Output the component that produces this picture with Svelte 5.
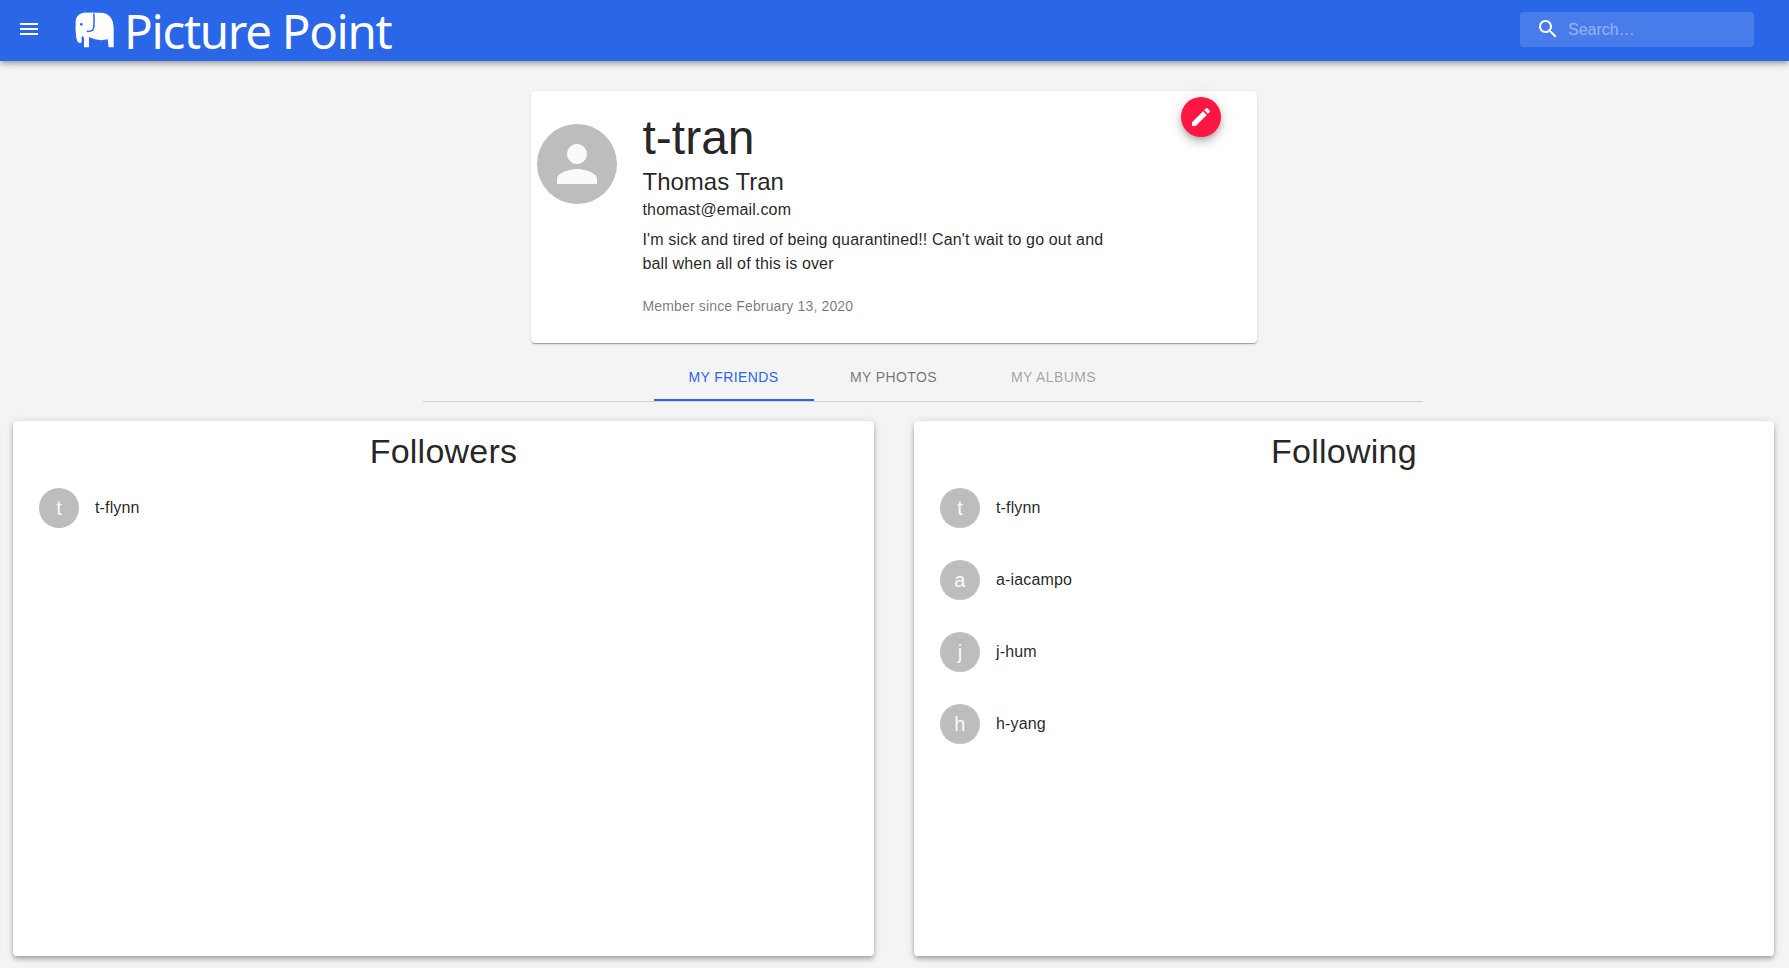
<script>
  const followers = ['t-flynn'];
  const following = ['t-flynn', 'a-iacampo', 'j-hum', 'h-yang'];
  const panels = [
    { title: 'Followers', users: followers },
    { title: 'Following', users: following }
  ];
</script>

<header class="bar">
  <svg class="icon menu" viewBox="0 0 24 24"><path d="M3 18h18v-2H3v2zm0-5h18v-2H3v2zm0-7v2h18V6H3z" /></svg>
  <div class="brand">
    <svg class="elephant" viewBox="0 0 117 108">
      <path fill="#fff" d="M22 3Q28 1 38 2Q48 1 58 2H76Q98 2 108 18Q116 29 116 46V106H101L98 82Q79 87 60 82Q48 78 42 76V106H27V77L23 72Q20 72 20 78V90Q19 94 14 93Q4 91 3 68Q1 52 2 28Q3 8 22 3Z" />
      <path class="ear" d="M56 5Q58 15 57 35Q57 54 50 56Q44 59 35 58" />
      <circle cx="19" cy="37" r="4" fill="#2a66e8" />
    </svg>
    <span class="name">Picture Point</span>
  </div>
  <label class="search">
    <svg class="icon" viewBox="0 0 24 24"><path d="M15.5 14h-.79l-.28-.27C15.41 12.59 16 11.11 16 9.5 16 5.91 13.09 3 9.5 3S3 5.91 3 9.5 5.91 16 9.5 16c1.61 0 3.09-.59 4.23-1.57l.27.28v.79l5 4.99L20.49 19l-4.99-5zm-6 0C7.01 14 5 11.99 5 9.5S7.01 5 9.5 5 14 7.01 14 9.5 11.99 14 9.5 14z" /></svg>
    <input placeholder="Search…" />
  </label>
</header>

<main>
  <section class="profile">
    <div class="avatar large">
      <svg viewBox="0 0 24 24"><path d="M12 12c2.21 0 4-1.79 4-4s-1.79-4-4-4-4 1.79-4 4 1.79 4 4 4zm0 2c-2.67 0-8 1.34-8 4v2h16v-2c0-2.66-5.33-4-8-4z" /></svg>
    </div>
    <div class="details">
      <h1>t-tran</h1>
      <h2>Thomas Tran</h2>
      <p>thomast@email.com</p>
      <p class="bio">I'm sick and tired of being quarantined!! Can't wait to go out and ball when all of this is over</p>
      <p class="since">Member since February 13, 2020</p>
    </div>
    <button class="fab" aria-label="Edit">
      <svg viewBox="0 0 24 24"><path d="M3 17.25V21h3.75L17.81 9.94l-3.75-3.75L3 17.25zM20.71 7.04c.39-.39.39-1.02 0-1.41l-2.34-2.34c-.39-.39-1.02-.39-1.41 0l-1.83 1.83 3.75 3.75 1.83-1.83z" /></svg>
    </button>
  </section>

  <nav class="tabs">
    <button class="tab active">My Friends</button>
    <button class="tab">My Photos</button>
    <button class="tab" disabled>My Albums</button>
  </nav>

  <div class="panels">
    {#each panels as panel}
      <section class="panel">
        <h3>{panel.title}</h3>
        <ul>
          {#each panel.users as user}
            <li><span class="avatar">{user[0]}</span><span>{user}</span></li>
          {/each}
        </ul>
      </section>
    {/each}
  </div>
</main>

<style>
  :global(body) {
    background: #f4f4f4;
    font-family: "Liberation Sans", Arial, sans-serif;
    color: rgba(0, 0, 0, 0.87);
    font-size: 16px;
    line-height: 24px;
    letter-spacing: 0.00938em;
  }
  main { padding-bottom: 12px; }
  h1, h2, h3, p, ul { margin: 0; padding: 0; font-weight: 400; }
  button, input { font: inherit; border: 0; background: none; padding: 0; margin: 0; outline: 0; }
  .bar {
    box-sizing: border-box;
    height: 61px;
    display: flex;
    align-items: flex-start;
    padding: 0 35px 0 17px;
    background: #2a66e8;
    color: #fff;
    position: relative;
    box-shadow: 0 2px 4px -1px rgba(0,0,0,.2), 0 4px 5px rgba(0,0,0,.14), 0 1px 10px rgba(0,0,0,.12);
  }
  .icon { width: 24px; height: 24px; fill: #fff; flex: none; }
  .menu { margin-top: 17px; }
  .brand { display: flex; margin-left: 34px; flex: 1; }
  .elephant { width: 39px; height: 36px; margin-top: 12px; flex: none; }
  .ear { fill: none; stroke: #2a66e8; stroke-width: 4.5; }
  .name {
    font-family: "Noto Sans", "Open Sans", sans-serif;
    font-size: 47.5px;
    line-height: 64px;
    letter-spacing: -1.3px;
    margin-left: 10px;
    margin-top: -1px;
    white-space: nowrap;
  }
  .search {
    box-sizing: border-box;
    width: 234px;
    height: 35px;
    margin-top: 12px;
    padding: 5px 8px 0 16px;
    display: flex;
    gap: 8px;
    border-radius: 4px;
    background: rgba(255, 255, 255, 0.15);
  }
  .search input { width: 170px; height: 24px; padding-top: 1px; color: #fff; letter-spacing: 0; }
  .search input::placeholder { color: #fff; opacity: 0.42; }
  .profile {
    box-sizing: border-box;
    width: 726px;
    height: 252px;
    margin: 30px 0 0 531px;
    padding: 6px 36px 0 6px;
    display: flex;
    align-items: flex-start;
    background: #fff;
    border-radius: 4px;
    box-shadow: 0 2px 1px -1px rgba(0,0,0,.2), 0 1px 1px rgba(0,0,0,.14), 0 1px 3px rgba(0,0,0,.12);
  }
  .avatar {
    width: 40px;
    height: 40px;
    border-radius: 50%;
    background: #bdbdbd;
    color: #fafafa;
    display: flex;
    align-items: center;
    justify-content: center;
    font-size: 20px;
    flex: none;
  }
  .avatar.large { width: 80px; height: 80px; margin-top: 27px; }
  .avatar svg { width: 60px; height: 60px; fill: #fafafa; }
  .details { width: 480px; margin: 13px 0 0 25.5px; flex: none; }
  h1 { font-size: 48px; line-height: 55px; letter-spacing: 0; }
  h2 { font-size: 24px; line-height: 32px; letter-spacing: 0; padding-top: 1px; }
  .bio { margin-top: 6px; }
  .since { margin-top: 20px; font-size: 14px; line-height: 20px; letter-spacing: 0.01071em; color: rgba(0, 0, 0, 0.54); }
  .fab {
    width: 40px;
    height: 40px;
    margin-left: auto;
    display: flex;
    align-items: center;
    justify-content: center;
    border-radius: 50%;
    background: #ff1744;
    box-shadow: 0 3px 5px -1px rgba(0,0,0,.2), 0 6px 10px rgba(0,0,0,.14), 0 1px 18px rgba(0,0,0,.12);
  }
  .fab svg { width: 24px; height: 24px; fill: #fff; }
  .tabs {
    width: 769px;
    height: 48px;
    margin: 10px 0 0 423px;
    padding-left: 231px;
    display: flex;
    border-bottom: 1px solid #d3d3d3;
  }
  .tab {
    box-sizing: border-box;
    width: 160px;
    font-size: 14px;
    letter-spacing: 0.02857em;
    text-transform: uppercase;
    color: rgba(0, 0, 0, 0.54);
    border-bottom: 2px solid transparent;
    padding: 2px 1px 0 0;
  }
  .tab.active { color: #2a66e8; border-color: #2a66e8; }
  .tab:disabled { color: rgba(0, 0, 0, 0.36); }
  .panels { display: grid; grid-template-columns: 861px 860px; gap: 40px; margin: 19px 0 0 13px; }
  .panel {
    box-sizing: border-box;
    height: 535px;
    padding-top: 9px;
    background: #fff;
    border-radius: 4px;
    box-shadow: 0 2px 4px -1px rgba(0,0,0,.2), 0 4px 5px rgba(0,0,0,.14), 0 1px 10px rgba(0,0,0,.12);
  }
  h3 { font-size: 34px; line-height: 42px; letter-spacing: 0.00735em; text-align: center; }
  ul { list-style: none; padding: 16px 26px 0; display: flex; flex-direction: column; gap: 32px; }
  li { display: flex; align-items: center; gap: 16px; height: 40px; }
</style>
